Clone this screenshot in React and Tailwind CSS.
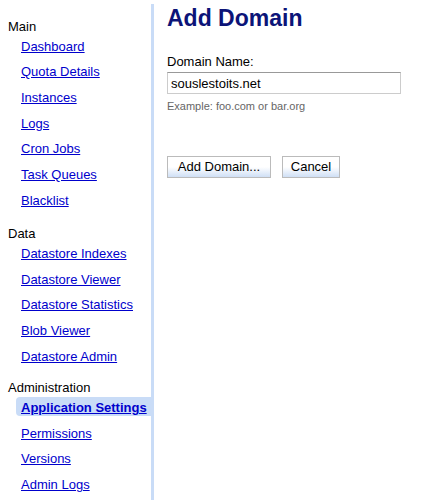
import React from "react";

const sections = [
  { title: "Main", gap: "", links: ["Dashboard", "Quota Details", "Instances", "Logs", "Cron Jobs", "Task Queues", "Blacklist"] },
  { title: "Data", gap: "mt-[10.7px]", links: ["Datastore Indexes", "Datastore Viewer", "Datastore Statistics", "Blob Viewer", "Datastore Admin"] },
  { title: "Administration", gap: "mt-[8.5px]", links: ["Application Settings", "Permissions", "Versions", "Admin Logs"] },
];

export default function App() {
  return (
    <div className="flex w-[423px] h-[500px] bg-white overflow-hidden text-[13px] leading-4 text-black" style={{ fontFamily: '"Liberation Sans", Arial, sans-serif' }}>
      <div className="w-[154px] shrink-0 pt-[4px]">
        <div className="h-[496px] border-r-[3px] border-[#c9dcf7] pt-[14.5px]">
          {sections.map((s) => (
            <div key={s.title} className={s.gap}>
              <div className="pl-[8px] leading-4 mb-[1px]">{s.title}</div>
              {s.links.map((l) => {
                const sel = l === "Application Settings";
                return (
                  <div key={l} className="h-[25.7px] leading-4">
                    {sel ? (
                      <div className="ml-[16px] h-[19px] pt-[3px] pl-[5px] leading-4 bg-[#c9dcf7] rounded-l-[4px]">
                        <a href="#" className="leading-4 font-bold text-[#0000cc] underline">{l}</a>
                      </div>
                    ) : (
                      <div className="h-[19px] pt-[3px] pl-[21px] leading-4">
                        <a href="#" className="leading-4 text-[#0000cc] underline">{l}</a>
                      </div>
                    )}
                  </div>
                );
              })}
            </div>
          ))}
        </div>
      </div>
      <div className="flex-1 pl-[13px] pt-[4px]">
        <h1 className="text-[23px] leading-[28px] font-bold text-[#0c1478]">Add Domain</h1>
        <div className="mt-[22px] leading-4">Domain Name:</div>
        <input
          readOnly
          value="souslestoits.net"
          className="mt-[2px] block w-[234px] h-[22px] px-[3px] border border-[#cccccc] border-t-[#999999] text-[13px] text-black outline-none"
          style={{ fontFamily: '"Liberation Sans", Arial, sans-serif' }}
        />
        <div className="mt-[4px] text-[11px] leading-4 text-[#666666]">Example: foo.com or bar.org</div>
        <div className="mt-[42px] flex gap-[11px]">
          <button className="w-[104px] h-[22px] border border-[#bbbbbb] bg-gradient-to-b from-white via-white to-[#cfdff5] text-[13px] text-black leading-4" style={{ fontFamily: '"Liberation Sans", Arial, sans-serif' }}>
            Add Domain...
          </button>
          <button className="w-[58px] h-[22px] border border-[#bbbbbb] bg-gradient-to-b from-white via-white to-[#cfdff5] text-[13px] text-black leading-4" style={{ fontFamily: '"Liberation Sans", Arial, sans-serif' }}>
            Cancel
          </button>
        </div>
      </div>
    </div>
  );
}
